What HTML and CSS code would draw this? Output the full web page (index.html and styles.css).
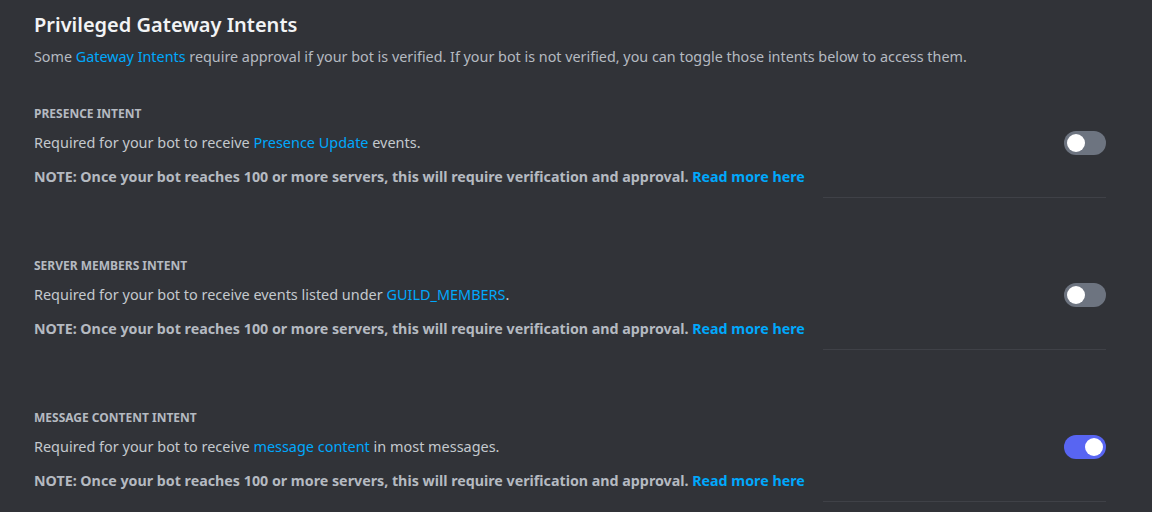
FILE: index.html
```html
<!DOCTYPE html>
<html>
<head>
<meta charset="utf-8">
<link rel="stylesheet" href="styles.css">
</head>
<body>
<div class="page">
  <h2 class="title">Privileged Gateway Intents</h2>
  <p class="subtitle">Some <a class="link">Gateway Intents</a> require approval if your bot is verified. If your bot is not verified, you can toggle those intents below to access them.</p>

  <section class="intent">
    <h3 class="label">PRESENCE INTENT</h3>
    <div class="row">
      <p class="desc">Required for your bot to receive <a class="link">Presence Update</a> events.</p>
      <div class="switch"><span class="knob"></span></div>
    </div>
    <p class="note">NOTE: Once your bot reaches 100 or more servers, this will require verification and approval. <a class="link strong">Read more here</a></p>
    <div class="divider"></div>
  </section>

  <section class="intent">
    <h3 class="label">SERVER MEMBERS INTENT</h3>
    <div class="row">
      <p class="desc">Required for your bot to receive events listed under <a class="link">GUILD_MEMBERS</a>.</p>
      <div class="switch"><span class="knob"></span></div>
    </div>
    <p class="note">NOTE: Once your bot reaches 100 or more servers, this will require verification and approval. <a class="link strong">Read more here</a></p>
    <div class="divider"></div>
  </section>

  <section class="intent">
    <h3 class="label">MESSAGE CONTENT INTENT</h3>
    <div class="row">
      <p class="desc">Required for your bot to receive <a class="link">message content</a> in most messages.</p>
      <div class="switch on"><span class="knob"></span></div>
    </div>
    <p class="note">NOTE: Once your bot reaches 100 or more servers, this will require verification and approval. <a class="link strong">Read more here</a></p>
    <div class="divider"></div>
  </section>
</div>
</body>
</html>
```
FILE: styles.css
```css
* { box-sizing: border-box; }
html, body {
  margin: 0;
  background: #313338;
  font-family: "Noto Sans", "Open Sans", sans-serif;
  overflow: hidden;
}
.page {
  padding: 13px 46px 0 34px;
  display: flex;
  flex-direction: column;
}
.title {
  margin: 0;
  font-size: 20px;
  line-height: 24px;
  font-weight: 600;
  color: #f2f3f5;
}
.subtitle {
  margin: 10px 0 0;
  font-size: 14.35px;
  line-height: 20px;
  color: #b5bac1;
}
.link { color: #00a8fc; text-decoration: none; }
.link.strong { font-weight: 700; }
.intent {
  display: flex;
  flex-direction: column;
  margin-top: 39px;
}
.intent + .intent { margin-top: 60px; }
.label {
  margin: 0;
  font-size: 12px;
  line-height: 16px;
  font-weight: 700;
  color: #b5bac1;
}
.row {
  margin-top: 9px;
  display: flex;
  align-items: center;
  justify-content: space-between;
}
.desc {
  margin: 0;
  font-size: 14.45px;
  line-height: 20px;
  color: #c4c9ce;
}
.note {
  margin: 13px 0 0;
  font-size: 14.25px;
  line-height: 18px;
  font-weight: 700;
  color: #b5bac1;
}
.divider {
  margin-top: 11px;
  align-self: flex-end;
  width: 283px;
  height: 1px;
  background: #3f4147;
}
.switch {
  width: 42px;
  height: 24px;
  border-radius: 12px;
  background: #6d7480;
  display: flex;
  align-items: center;
  padding: 0 3px;
}
.switch.on {
  background: #5865f2;
  justify-content: flex-end;
}
.knob {
  width: 18px;
  height: 18px;
  border-radius: 50%;
  background: #ffffff;
}
```
